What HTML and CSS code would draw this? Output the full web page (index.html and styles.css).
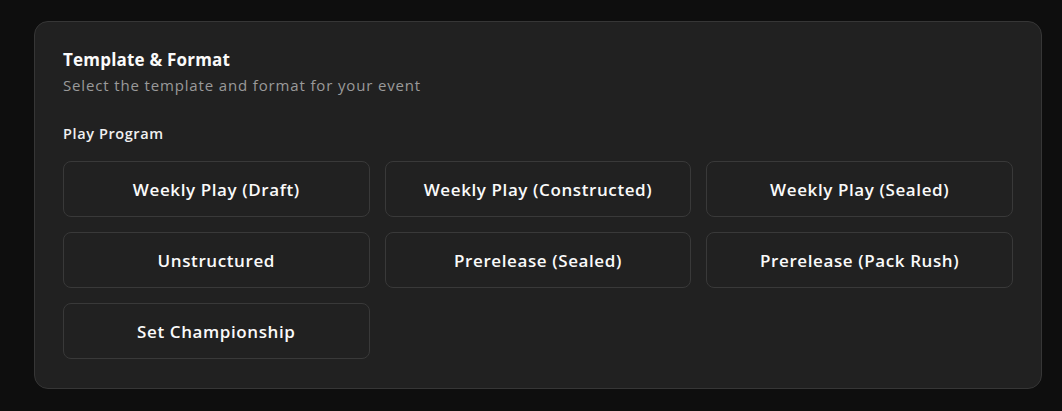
FILE: index.html
```html
<!DOCTYPE html>
<html>
<head>
<meta charset="utf-8">
<link rel="stylesheet" href="styles.css">
</head>
<body>
<section class="card">
  <h2 class="title">Template &amp; Format</h2>
  <p class="subtitle">Select the template and format for your event</p>
  <h3 class="label">Play Program</h3>
  <div class="grid">
    <button class="opt">Weekly Play (Draft)</button>
    <button class="opt">Weekly Play (Constructed)</button>
    <button class="opt">Weekly Play (Sealed)</button>
    <button class="opt">Unstructured</button>
    <button class="opt">Prerelease (Sealed)</button>
    <button class="opt">Prerelease (Pack Rush)</button>
    <button class="opt">Set Championship</button>
  </div>
</section>
</body>
</html>
```
FILE: styles.css
```css
html, body {
  margin: 0;
  background: #0e0e0e;
}
body {
  padding: 21px 20px 0 34px;
  font-family: "Open Sans", Inter, sans-serif;
  color: #f5f5f5;
}
.card {
  box-sizing: border-box;
  height: 368px;
  background: #212121;
  border: 1px solid #363636;
  border-radius: 14px;
  padding: 27px 28px 28px 28px;
}
.title {
  margin: 0;
  font-size: 17px;
  font-weight: 700;
  letter-spacing: 0.2px;
  line-height: 22px;
  color: #fafafa;
}
.subtitle {
  margin: 4px 0 0;
  font-size: 15px;
  letter-spacing: 0.85px;
  line-height: 20px;
  color: #9a9a9a;
}
.label {
  margin: 29px 0 0;
  font-size: 14.5px;
  font-weight: 600;
  letter-spacing: 0.6px;
  line-height: 20px;
  color: #f0f0f0;
}
.grid {
  margin-top: 17px;
  display: grid;
  grid-template-columns: repeat(3, 1fr);
  gap: 15px;
}
.opt {
  height: 56px;
  background: #212121;
  border: 1px solid #393939;
  border-radius: 8px;
  font-family: inherit;
  font-size: 17px;
  font-weight: 600;
  letter-spacing: 0.6px;
  color: #fafafa;
  padding: 0;
}
```
